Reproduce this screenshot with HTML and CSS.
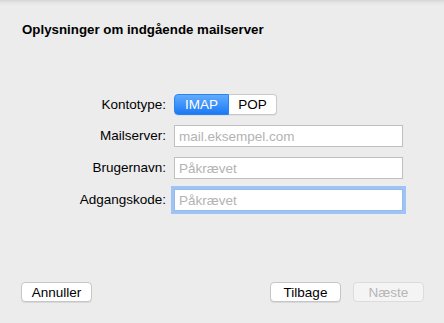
FILE: index.html
```html
<!DOCTYPE html>
<html lang="da">
<head>
    <meta charset="utf-8" />
    <meta name="viewport" content="width=device-width, initial-scale=1" />
    <title>Oplysninger om indgående mailserver</title>
    <link rel="stylesheet" href="styles.css">
</head>
<body>

<div class="sheet">
    <h1 class="sheet-title">Oplysninger om indgående mailserver</h1>

    <form class="server-form">
        <label class="field-label">Kontotype:</label>
        <div class="segmented">
            <button type="button" class="segment segment-active">IMAP</button>
            <button type="button" class="segment">POP</button>
        </div>

        <label class="field-label" for="mailserver">Mailserver:</label>
        <input class="field-input" type="text" id="mailserver" placeholder="mail.eksempel.com">

        <label class="field-label" for="brugernavn">Brugernavn:</label>
        <input class="field-input" type="text" id="brugernavn" placeholder="Påkrævet">

        <label class="field-label" for="adgangskode">Adgangskode:</label>
        <input class="field-input field-focus" type="password" id="adgangskode" placeholder="Påkrævet">
    </form>

    <div class="sheet-footer">
        <button type="button" class="push-button">Annuller</button>
        <div class="footer-right">
            <button type="button" class="push-button">Tilbage</button>
            <button type="button" class="push-button" disabled>Næste</button>
        </div>
    </div>
</div>

</body>
</html>
```

FILE: styles.css
```css
* {
    margin: 0;
    padding: 0;
    box-sizing: border-box;
}

html, body {
    width: 100%;
    height: 100%;
}

body {
    overflow: hidden;
    background-color: #ececec;
    font-family: "Liberation Sans", Arial, sans-serif;
    font-size: 13.5px;
    color: #000;
}

.sheet {
    display: flex;
    flex-direction: column;
    height: 100%;
    background: linear-gradient(to bottom, #d6d6d6 0px, #e6e6e6 3px, #ececec 6px);
}

.sheet-title {
    font-size: 13.3px;
    font-weight: bold;
    line-height: 15px;
    padding: 22px 22px 0;
}

.server-form {
    display: grid;
    grid-template-columns: 166px 229px;
    column-gap: 8px;
    row-gap: 10px;
    align-items: center;
    margin-top: 57px;
}

.field-label {
    text-align: right;
    line-height: 16px;
}

.segmented {
    display: flex;
    width: 103px;
    height: 21px;
}

.segment {
    font-family: inherit;
    font-size: 13.5px;
    background: #fff;
    border: 1px solid #c9c9c9;
    border-left: none;
    border-radius: 0 4px 4px 0;
    width: 48px;
    color: #000;
    box-shadow: 0 1px 0 rgba(0, 0, 0, 0.05);
}

.segment-active {
    width: 55px;
    color: #fff;
    border: 1px solid #2a83f3;
    border-radius: 4px 0 0 4px;
    background: linear-gradient(to bottom, #62abff, #1b7af5);
}

.field-input {
    height: 22px;
    width: 229px;
    border: 1px solid #bfbfbf;
    background: #fff;
    font-family: inherit;
    font-size: 13.5px;
    padding: 0 4px;
    outline: none;
}

.field-input::placeholder {
    color: #b3b3b3;
}

.field-focus {
    border-color: #9ab9e4;
    box-shadow: 0 0 0 3px #9ec4f6;
}

.sheet-footer {
    margin-top: auto;
    display: flex;
    justify-content: space-between;
    padding: 0 20px 21px 21px;
}

.footer-right {
    display: flex;
    gap: 12px;
}

.push-button {
    width: 71px;
    height: 20px;
    font-family: inherit;
    font-size: 13.5px;
    color: #000;
    background: #fff;
    border: 1px solid #c6c6c6;
    border-radius: 4px;
    box-shadow: 0 1px 0 rgba(0, 0, 0, 0.08);
}

.push-button:disabled {
    color: #b6b6b6;
    background: #f4f4f4;
    border-color: #dcdcdc;
    box-shadow: none;
}
```
